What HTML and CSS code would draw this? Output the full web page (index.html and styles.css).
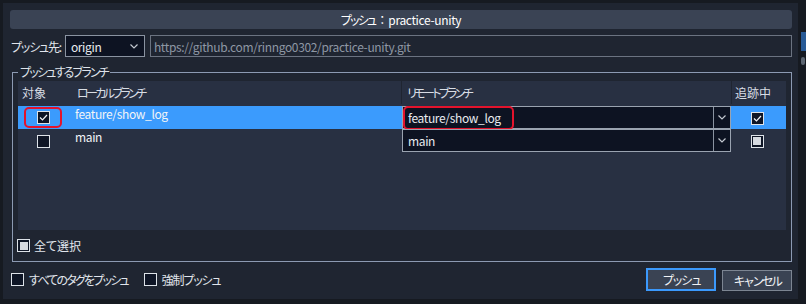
FILE: index.html
```html
<!DOCTYPE html>
<html lang="ja">

<head>
  <meta charset="UTF-8">
  <title>プッシュ</title>
  <link rel="stylesheet" href="styles.css">
</head>

<body>
  <div class="screen">
    <div class="dialog">
      <div class="title"><span class="kana-2">プッシュ</span><span class="colon">：</span><span class="latin">practice-unity</span></div>

      <div class="remote-row">
        <span class="label kana-1">プッシュ先:</span>
        <div class="combo combo-origin">
          <span class="latin">origin</span>
          <svg class="chev" width="8" height="5" viewBox="0 0 8 5"><polyline points="0.5,0.5 4,4 7.5,0.5" /></svg>
        </div>
        <div class="url latin">https://github.com/rinngo0302/practice-unity.git</div>
      </div>

      <fieldset class="branches">
        <legend><span class="kana-2">プッシュするブランチ</span></legend>

        <div class="grid-wrap">
          <div class="grid-row head">
            <div class="cell c1">対象</div>
            <div class="cell c2"><span class="kana-3">ローカルブランチ</span></div>
            <div class="cell c3"><span class="kana-3">リモートブランチ</span></div>
            <div class="cell c4">追跡中</div>
          </div>

          <div class="grid-row selected">
            <div class="cell c1">
              <span class="mark mark-on">
                <span class="cb"><svg width="11" height="11" viewBox="0 0 11 11"><polyline points="2,5.5 4.5,8 9,3" /></svg></span>
              </span>
            </div>
            <div class="cell c2 branch-name latin">feature/show_log</div>
            <div class="cell c3">
              <div class="combo combo-remote">
                <span class="latin">feature/show_log</span>
                <span class="combo-btn"><svg class="chev" width="8" height="5" viewBox="0 0 8 5"><polyline points="0.5,0.5 4,4 7.5,0.5" /></svg></span>
                <span class="highlight"></span>
              </div>
            </div>
            <div class="cell c4">
              <span class="cb"><svg width="11" height="11" viewBox="0 0 11 11"><polyline points="2,5.5 4.5,8 9,3" /></svg></span>
            </div>
          </div>

          <div class="grid-row">
            <div class="cell c1">
              <span class="mark"><span class="cb"></span></span>
            </div>
            <div class="cell c2 branch-name latin">main</div>
            <div class="cell c3">
              <div class="combo combo-remote">
                <span class="latin">main</span>
                <span class="combo-btn"><svg class="chev" width="8" height="5" viewBox="0 0 8 5"><polyline points="0.5,0.5 4,4 7.5,0.5" /></svg></span>
              </div>
            </div>
            <div class="cell c4">
              <span class="cb mixed"></span>
            </div>
          </div>
        </div>

        <div class="check-line select-all">
          <span class="cb mixed"></span>
          <span>全て選択</span>
        </div>
      </fieldset>

      <div class="footer">
        <div class="check-line">
          <span class="cb"></span>
          <span class="kana-2">すべてのタグをプッシュ</span>
        </div>
        <div class="check-line force">
          <span class="cb"></span>
          <span class="kana-1">強制プッシュ</span>
        </div>
        <div class="buttons">
          <button class="btn primary"><span class="kana-3">プッシュ</span></button>
          <button class="btn"><span class="kana-3">キャンセル</span></button>
        </div>
      </div>
    </div>

    <div class="side">
      <div class="side-tab"></div>
      <div class="side-num"></div>
    </div>
  </div>
</body>

</html>
```

FILE: styles.css
```css
body {
  margin: 0;
  background: #161a21;
  font-family: "Noto Sans CJK JP", "Noto Sans", sans-serif;
  font-size: 12px;
  color: #e1e5ec;
  font-feature-settings: "palt";
}

/* 日本語ラベルの字詰め */
.kana-1 {
  letter-spacing: -1.2px;
}

.kana-2 {
  letter-spacing: -1.8px;
}

.kana-3 {
  letter-spacing: -2.6px;
}

.latin {
  letter-spacing: -0.35px;
}

.screen {
  display: flex;
  height: 304px;
  padding: 3px 0 0 3px;
  box-sizing: border-box;
}

.dialog {
  width: 795px;
  height: 296px;
  box-sizing: border-box;
  background: #1f2531;
  padding: 7px 6px 8px 8px;
  display: flex;
  flex-direction: column;
}

.title {
  height: 20px;
  margin-left: -1px;
  background: #3a4354;
  border-radius: 3px;
  display: flex;
  align-items: center;
  justify-content: center;
  color: #fff;
}

.title .colon {
  font-feature-settings: normal;
  margin: 0 0 0 1px;
}

.remote-row {
  display: flex;
  align-items: center;
  gap: 4px;
  height: 22px;
  margin-top: 6px;
}

.combo {
  height: 22px;
  box-sizing: border-box;
  border: 1px solid #8a93a1;
  background: #0d1322;
  display: flex;
  align-items: center;
  justify-content: space-between;
  padding: 0 6px 0 5px;
  color: #e8ebf0;
}

.combo-origin {
  width: 80px;
}

.chev polyline {
  fill: none;
  stroke: #c3c8d0;
  stroke-width: 1.2;
}

.url {
  flex: 1;
  height: 22px;
  box-sizing: border-box;
  margin-left: 1px;
  border: 1px solid #6b7381;
  color: #8e97a4;
  padding-left: 3px;
  display: flex;
  align-items: center;
}

.branches {
  margin: 8px 0 0 1px;
  padding: 2px 5px 0 5px;
  border: 1px solid #8c9ab2;
  min-width: 0;
}

.branches legend {
  padding: 0 2px;
  line-height: 14px;
  color: #dfe3ea;
}

.grid-wrap {
  height: 149px;
  background: #283042;
}

.grid-row {
  display: grid;
  grid-template-columns: 55px 328px 330px 1fr;
  height: 23px;
}

.grid-row.head {
  margin-bottom: 2px;
  color: #d8dde5;
}

.grid-row.selected {
  background: #3b9bfd;
}

.cell {
  display: flex;
  align-items: center;
  min-width: 0;
}

.head .c1,
.head .c2 {
  padding-left: 4px;
}

.head .c3 {
  padding-left: 5px;
  border-left: 1px solid #1f2531;
}

.head .c4 {
  justify-content: flex-start;
  padding-left: 3px;
  border-left: 1px solid #1f2531;
}

.branch-name {
  align-items: flex-start;
  padding: 1px 0 0 2px;
  line-height: 14px;
  color: #f2f4f7;
}

.mark {
  width: 38px;
  height: 21px;
  box-sizing: border-box;
  margin-left: 6px;
  border: 2px solid transparent;
  border-radius: 5px;
  display: flex;
  align-items: center;
  justify-content: center;
  margin-top: 1px;
}

.mark-on {
  border-color: #e3132c;
  margin-top: -1px;
}

.cb {
  width: 13px;
  height: 13px;
  box-sizing: border-box;
  border: 1px solid #dde2e8;
  background: #0e1525;
  display: inline-flex;
  align-items: center;
  justify-content: center;
  flex-shrink: 0;
}

.cb polyline {
  fill: none;
  stroke: #f2f4f7;
  stroke-width: 1.2;
}

.cb.mixed::after {
  content: "";
  width: 8px;
  height: 8px;
  background: #d6dae0;
}

.c3 .combo-remote {
  position: relative;
  flex: 1;
  height: 23px;
  margin-left: 1px;
  padding: 0 0 0 5px;
  border-color: #9aa3b0;
}

.combo-btn {
  width: 16px;
  height: 100%;
  border-left: 1px solid #8a93a1;
  display: flex;
  align-items: center;
  justify-content: center;
}

.highlight {
  position: absolute;
  left: 0;
  top: -1px;
  width: 111px;
  height: 24px;
  box-sizing: border-box;
  border: 2px solid #e3132c;
  border-radius: 5px;
}

.c4 {
  justify-content: center;
  padding-right: 3px;
}

.grid-row .c4 .cb {
  margin-top: 1px;
}

.check-line {
  display: flex;
  align-items: center;
  gap: 5px;
}

.select-all {
  height: 13px;
  margin: 9px 0 9px -1px;
  gap: 4px;
}

.footer {
  display: flex;
  align-items: center;
  height: 23px;
  margin-top: 6px;
}

.force {
  margin-left: 16px;
}

.buttons {
  margin-left: auto;
  align-self: stretch;
  display: flex;
  align-items: flex-end;
  gap: 6px;
}

.btn {
  width: 70px;
  height: 21px;
  box-sizing: border-box;
  background: #3a4353;
  border: 1px solid #7c8592;
  color: #f0f2f5;
  font-family: inherit;
  font-size: 12px;
  padding: 0;
}

.btn.primary {
  height: 23px;
  border: 2px solid #3b99fc;
}

.side {
  flex: 1;
  display: flex;
  flex-direction: column;
  padding-left: 3px;
  overflow: hidden;
}

.side-tab {
  margin-top: 29px;
  height: 19px;
  background: #285a96;
}

.side-num {
  margin-top: 6px;
  width: 4px;
  height: 8px;
  border-radius: 2px;
  background: #5d6672;
}
```
